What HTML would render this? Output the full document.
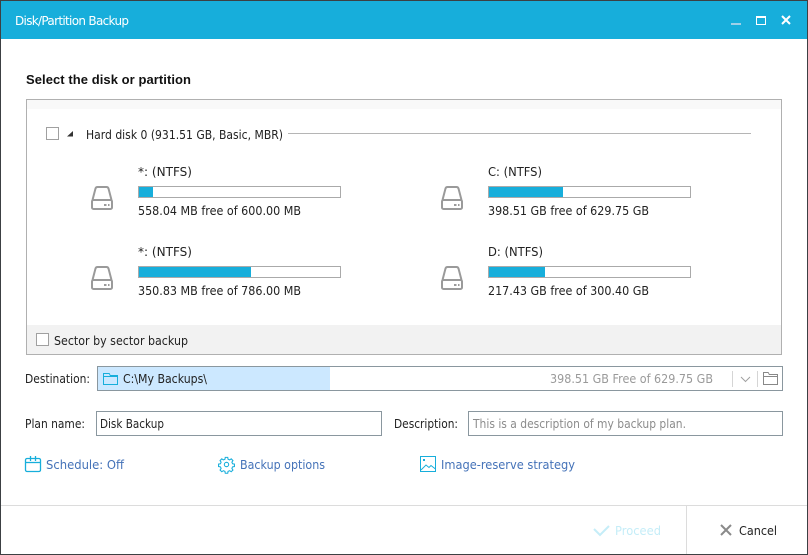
<!DOCTYPE html>
<html><head><meta charset="utf-8"><title>Disk/Partition Backup</title>
<style>
html,body{margin:0;padding:0;background:#fff;width:808px;height:555px;overflow:hidden}
svg{display:block}
text{font-family:"DejaVu Sans","Liberation Sans",sans-serif;font-size:12px;fill:#222}
.l{fill:#4472b8}
</style></head><body>
<svg width="808" height="555" viewBox="0 0 808 555" xmlns="http://www.w3.org/2000/svg" shape-rendering="crispEdges">
<defs>
<g id="hdd" fill="none" stroke="#9a9a9a" stroke-width="2" shape-rendering="geometricPrecision">
<path d="M1.500 14 L4.500 2.500 Q5 1 6.500 1 H15.500 Q17 1 17.500 2.500 L20.500 14"/>
<rect x="1" y="14" width="20" height="9" rx="1.500"/>
<path d="M13 19h2.500M17 19h1.500" stroke-width="2"/>
</g>
</defs>
<rect width="808" height="555" fill="#fff"/>
<rect x="0" y="0" width="808" height="39" fill="#17aedb"/>
<rect x="0" y="0" width="808" height="1" fill="#3c4043"/>
<rect x="0" y="0" width="1" height="555" fill="#3c4043"/>
<rect x="807" y="0" width="1" height="555" fill="#3c4043"/>
<rect x="0" y="554" width="808" height="1" fill="#3c4043"/>
<text x="15" y="25" textLength="114" style="fill:#fff">Disk/Partition Backup</text>
<rect x="731" y="23" width="10" height="2" fill="#9fd0e8"/>
<rect x="756.500" y="16.500" width="9" height="8" fill="none" stroke="#fff"/>
<rect x="756" y="16" width="10" height="2" fill="#fff"/>
<path d="M782 16l8 8M790 16l-8 8" stroke="#fff" stroke-width="2" fill="none" shape-rendering="geometricPrecision"/>

<text x="26" y="84" textLength="165" style="font-family:'Liberation Sans',sans-serif;font-weight:bold;font-size:13px;fill:#111">Select the disk or partition</text>

<rect x="26.500" y="99.500" width="755" height="255" fill="#fff" stroke="#b0b0b0"/>
<rect x="27" y="100" width="754" height="9" fill="#f9f9f9"/>
<rect x="27" y="325" width="754" height="29" fill="#f2f2f2"/>

<rect x="46.500" y="127.500" width="12" height="12" fill="#fff" stroke="#a0a0a0"/>
<path d="M67 136.500h6v-5.500z" fill="#333" shape-rendering="geometricPrecision"/>
<text x="86" y="139" textLength="197" lengthAdjust="spacingAndGlyphs">Hard disk 0 (931.51 GB, Basic, MBR)</text>
<rect x="288" y="133" width="463" height="1" fill="#b5b5b5"/>

<use href="#hdd" x="91" y="186"/>
<text x="138" y="176" textLength="54" lengthAdjust="spacingAndGlyphs">*: (NTFS)</text>
<rect x="138.500" y="186.500" width="202" height="11" fill="#fff" stroke="#aaa"/>
<rect x="139" y="187" width="14" height="10" fill="#17aedb"/>
<text x="138" y="215" textLength="163" lengthAdjust="spacingAndGlyphs">558.04 MB free of 600.00 MB</text>

<use href="#hdd" x="441" y="186"/>
<text x="488" y="176" textLength="54" lengthAdjust="spacingAndGlyphs">C: (NTFS)</text>
<rect x="488.500" y="186.500" width="202" height="11" fill="#fff" stroke="#aaa"/>
<rect x="489" y="187" width="74" height="10" fill="#17aedb"/>
<text x="488" y="215" textLength="161" lengthAdjust="spacingAndGlyphs">398.51 GB free of 629.75 GB</text>

<use href="#hdd" x="91" y="266"/>
<text x="138" y="256" textLength="54" lengthAdjust="spacingAndGlyphs">*: (NTFS)</text>
<rect x="138.500" y="266.500" width="202" height="11" fill="#fff" stroke="#aaa"/>
<rect x="139" y="267" width="112" height="10" fill="#17aedb"/>
<text x="138" y="295" textLength="163" lengthAdjust="spacingAndGlyphs">350.83 MB free of 786.00 MB</text>

<use href="#hdd" x="441" y="266"/>
<text x="488" y="256" textLength="55" lengthAdjust="spacingAndGlyphs">D: (NTFS)</text>
<rect x="488.500" y="266.500" width="202" height="11" fill="#fff" stroke="#aaa"/>
<rect x="489" y="267" width="56" height="10" fill="#17aedb"/>
<text x="488" y="295" textLength="161" lengthAdjust="spacingAndGlyphs">217.43 GB free of 300.40 GB</text>

<rect x="36.500" y="333.500" width="12" height="12" fill="#fff" stroke="#a0a0a0"/>
<text x="54" y="345" textLength="134" lengthAdjust="spacingAndGlyphs">Sector by sector backup</text>

<text x="25" y="383" textLength="65" lengthAdjust="spacingAndGlyphs">Destination:</text>
<rect x="97.500" y="366.500" width="685" height="24" fill="#fff" stroke="#8a979f"/>
<rect x="98" y="367" width="232" height="23" fill="#cce8ff"/>
<path d="M103.500 373.500v11h14v-9h-7l-1.500-2z" fill="none" stroke="#17aedb"/>
<path d="M103.500 376.500h14" fill="none" stroke="#17aedb"/>
<text x="123" y="383" textLength="84" lengthAdjust="spacingAndGlyphs">C:\My Backups\</text>
<text x="550" y="383" textLength="163" lengthAdjust="spacingAndGlyphs" style="fill:#9a9a9a">398.51 GB Free of 629.75 GB</text>
<rect x="732" y="371" width="1" height="16" fill="#d5d5d5"/>
<path d="M741 377l4.500 4.500 4.500-4.500" fill="none" stroke="#a0a0a0" shape-rendering="geometricPrecision"/>
<rect x="757" y="371" width="1" height="16" fill="#d5d5d5"/>
<path d="M763.500 372.500v12h14v-10h-8l-1.500-2z" fill="none" stroke="#888"/>
<path d="M763.500 376.500h14" fill="none" stroke="#888"/>

<text x="25" y="428" textLength="60" lengthAdjust="spacingAndGlyphs">Plan name:</text>
<rect x="96.500" y="411.500" width="285" height="24" fill="#fff" stroke="#8a979f"/>
<text x="100" y="428" textLength="64" lengthAdjust="spacingAndGlyphs">Disk Backup</text>
<text x="394" y="428" textLength="64" lengthAdjust="spacingAndGlyphs">Description:</text>
<rect x="468.500" y="411.500" width="314" height="24" fill="#fff" stroke="#8a979f"/>
<text x="473" y="428" textLength="213" lengthAdjust="spacingAndGlyphs" style="fill:#8c8c8c">This is a description of my backup plan.</text>

<g fill="none" stroke="#17aedb" stroke-width="1.300" shape-rendering="geometricPrecision">
<rect x="25.500" y="458.500" width="15" height="13" rx="1.500"/>
<path d="M25.500 462.500h15"/>
<path d="M30.500 456v5M35.500 456v5"/>
</g>
<text class="l" x="46" y="469" textLength="78" lengthAdjust="spacingAndGlyphs">Schedule: Off</text>

<g fill="none" stroke="#17aedb" stroke-width="1.700" shape-rendering="geometricPrecision" transform="translate(226.500 464.500) scale(.62) translate(-226.500 -464.500)">
<path d="M224.500 453h4l.5 3 2.600 1.100 2.500-1.700 2.800 2.800-1.700 2.500 1.100 2.600 3 .5v4l-3 .5-1.100 2.600 1.700 2.500-2.800 2.800-2.500-1.700-2.600 1.100-.5 3h-4l-.5-3-2.600-1.100-2.500 1.700-2.800-2.800 1.700-2.500-1.100-2.600-3-.5v-4l3-.5 1.100-2.600-1.700-2.500 2.800-2.800 2.500 1.700 2.600-1.100z"/>
<circle cx="226.500" cy="464.500" r="3.500"/>
</g>
<text class="l" x="240" y="469" textLength="85" lengthAdjust="spacingAndGlyphs">Backup options</text>

<g fill="none" stroke="#17aedb" stroke-width="1.200">
<rect x="420.500" y="456.500" width="15" height="15"/>
<path d="M421 470l5-5 3 2.500 2-2 4.500 3.500" stroke-width="1" shape-rendering="geometricPrecision"/>
</g>
<rect x="423" y="459" width="2" height="2" fill="#17aedb"/>
<text class="l" x="441" y="469" textLength="134" lengthAdjust="spacingAndGlyphs">Image-reserve strategy</text>

<rect x="1" y="505" width="806" height="1" fill="#dcdcdc"/>
<rect x="686" y="506" width="1" height="48" fill="#dcdcdc"/>
<path d="M594 529l6 6 9-9" fill="none" stroke="#c5edf8" stroke-width="2" shape-rendering="geometricPrecision"/>
<text x="615" y="535" textLength="46" lengthAdjust="spacingAndGlyphs" style="fill:#c5edf8">Proceed</text>
<path d="M721 525l10 10M731 525l-10 10" fill="none" stroke="#8a8a8a" stroke-width="2" shape-rendering="geometricPrecision"/>
<text x="739" y="535" textLength="38" lengthAdjust="spacingAndGlyphs">Cancel</text>
</svg>
</body></html>
